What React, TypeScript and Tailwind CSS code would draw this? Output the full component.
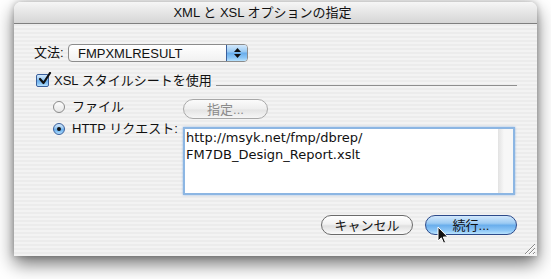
import React from 'react';

const font = "font-['Liberation_Sans','Noto_Sans_CJK_JP',sans-serif]";

const AquaBlue =
  'bg-[linear-gradient(to_bottom,#d2e8fc_0%,#9ccbf3_40%,#6aaeec_52%,#8cc6f6_80%,#b8e2fd_100%)]';

const Checkbox = () => (
  <div className={`w-[13px] h-[13px] rounded-[2px] border border-[#3a5f9c] ${AquaBlue} relative shrink-0`}>
    <svg className="absolute left-[1px] -top-[3px]" width="14" height="14" viewBox="0 0 14 14">
      <path d="M2 7 L5.5 11 L12 1" fill="none" stroke="#111" strokeWidth="2.2" strokeLinecap="round" strokeLinejoin="round" />
    </svg>
  </div>
);

const Radio = ({ on }: { on?: boolean }) =>
  on ? (
    <div className={`w-[12px] h-[12px] rounded-full border border-[#3a5f9c] ${AquaBlue} flex items-center justify-center shrink-0`}>
      <div className="w-[4px] h-[4px] rounded-full bg-[#111]" />
    </div>
  ) : (
    <div className="w-[12px] h-[12px] rounded-full border border-[#8a8a8a] bg-[linear-gradient(to_bottom,#fdfdfd,#e6e6e6)] shrink-0" />
  );

const App = () => {
  return (
    <div className={`w-[551px] h-[279px] bg-white overflow-hidden relative ${font}`}>
      <div className="ml-[14px] mt-[2px] w-[523px] h-[254px] rounded-t-[7px] shadow-[0_8px_18px_rgba(0,0,0,0.55),0_0_6px_rgba(0,0,0,0.25)] flex flex-col overflow-hidden">
        {/* title bar */}
        <div className="h-[22px] shrink-0 bg-[linear-gradient(to_bottom,#f6f6f6,#e2e2e2_60%,#d6d6d6)] border-b border-[#7f7f7f] flex items-center justify-center pr-[26px] text-[13px] text-[#111] leading-none">
          XML と XSL オプションの指定
        </div>

        {/* body */}
        <div className="flex-1 relative bg-[repeating-linear-gradient(to_bottom,#ececec_0px,#ececec_2px,#f3f3f3_2px,#f3f3f3_4px)] pl-[20px] pt-[20px] text-[13px] text-[#111]">
          {/* 文法 row */}
          <div className="flex items-center h-[18px]">
            <span className="w-[34px]">文法:</span>
            <div className="w-[180px] h-[18px] rounded-[4px] border border-[#8c8c8c] bg-[linear-gradient(to_bottom,#ffffff,#f1f1f1)] flex items-stretch overflow-hidden">
              <div className="flex-1 flex items-center pl-[9px] leading-none">FMPXMLRESULT</div>
              <div className={`w-[21px] ${AquaBlue} border-l border-[#3a5f9c] flex flex-col items-center justify-center gap-[2px]`}>
                <svg width="7" height="4" viewBox="0 0 7 4"><path d="M3.5 0 L7 4 L0 4Z" fill="#111" /></svg>
                <svg width="7" height="4" viewBox="0 0 7 4"><path d="M0 0 L7 0 L3.5 4Z" fill="#111" /></svg>
              </div>
            </div>
          </div>

          {/* XSL row */}
          <div className="flex items-center mt-[11px] ml-[2px] h-[14px]">
            <Checkbox />
            <span className="ml-[5px] leading-none">XSL スタイルシートを使用</span>
            <div className="ml-[4px] mt-[10px] w-[301px] h-[1px] bg-[#8e8e8e]" />
          </div>

          {/* ファイル row */}
          <div className="flex items-start mt-[12px] ml-[19px] h-[20px]">
            <div className="mt-[2px]"><Radio /></div>
            <span className="ml-[7px] leading-[16px] w-[110px]">ファイル</span>
            <div className="ml-[1px] w-[85px] h-[20px] rounded-full border border-[#a8a8a8] bg-[linear-gradient(to_bottom,#fbfbfb,#eeeeee_50%,#e4e4e4_55%,#f6f6f6)] flex items-center justify-center text-[#8a8a8a] leading-none">
              指定...
            </div>
          </div>

          {/* HTTP row */}
          <div className="flex items-start mt-[3px] ml-[19px]">
            <div className="mt-[1px]"><Radio on /></div>
            <span className="ml-[7px] leading-[14px] w-[111px]">HTTP リクエスト:</span>
            <div className="w-[332px] h-[68px] mt-[5px] border-[2px] border-[#8cb6e3] bg-white shadow-[0_0_2px_rgba(80,140,220,0.6)] flex">
              <div className="flex-1 pl-[1px] font-['DejaVu_Sans',sans-serif] text-[13px] leading-[17px] text-[#111]">
                http://msyk.net/fmp/dbrep/
                <br />
                FM7DB_Design_Report.xslt
              </div>
              <div className="w-[15px] bg-[linear-gradient(to_right,#e2e2e2,#f7f7f7_40%,#f7f7f7)]" />
            </div>
          </div>

          {/* buttons */}
          <div className="flex justify-end gap-[12px] mt-[20px] pr-[20px]">
            <div className="w-[92px] h-[20px] rounded-full border border-[#6b6b6b] bg-[linear-gradient(to_bottom,#ffffff,#f2f2f2_45%,#e0e0e0_55%,#fafafa)] flex items-center justify-center leading-none">
              キャンセル
            </div>
            <div className={`w-[92px] h-[20px] rounded-full border border-[#2d4a8a] ${AquaBlue} flex items-center justify-center leading-none`}>
              続行...
            </div>
          </div>

          {/* resize grip */}
          <svg className="absolute right-[1px] bottom-[1px]" width="13" height="13" viewBox="0 0 13 13">
            <path d="M12 2 L2 12 M12 6 L6 12 M12 10 L10 12" stroke="#8a8a8a" strokeWidth="1" />
            <path d="M12 3 L3 12 M12 7 L7 12 M12 11 L11 12" stroke="#ffffff" strokeWidth="1" />
          </svg>
        </div>
      </div>

      {/* cursor */}
      <svg className="absolute left-[437px] top-[226px]" width="12" height="19" viewBox="0 0 12 19">
        <path d="M1 1 L1 15 L4.3 11.8 L6.6 17.2 L8.6 16.3 L6.3 11 L10.8 11 Z" fill="#111" stroke="#fff" strokeWidth="1" />
      </svg>
    </div>
  );
};

export default App;
